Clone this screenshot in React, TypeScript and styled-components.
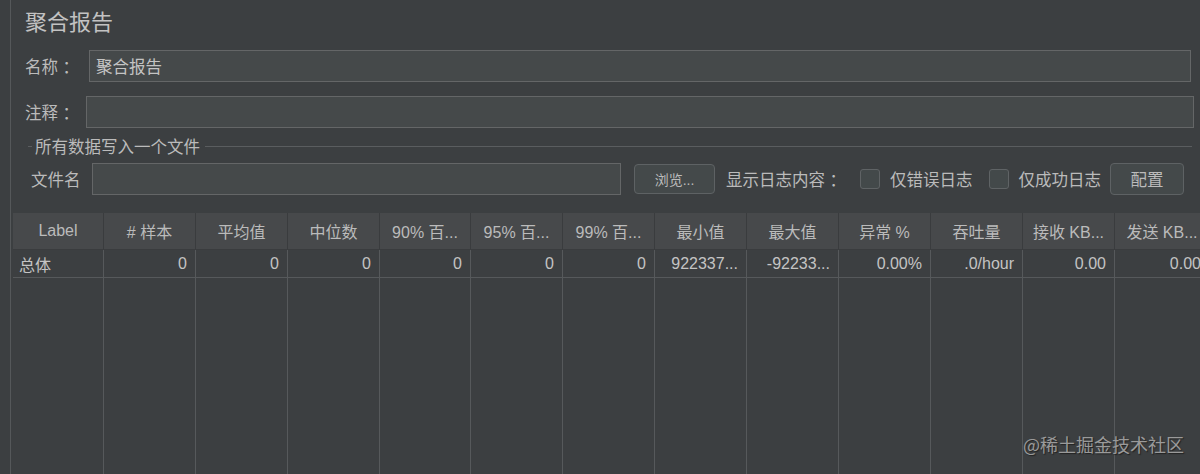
import React from "react";
import styled, { createGlobalStyle } from "styled-components";

const Global = createGlobalStyle`
  html, body { margin: 0; padding: 0; background: #3c3f41; }
  body { font-family: "Liberation Sans", "Noto Sans CJK SC", sans-serif; color: #bbbbbb; }
  * { box-sizing: border-box; }
`;

const Page = styled.div`
  width: 1200px;
  height: 474px;
  overflow: hidden;
  position: relative;
  background: #3c3f41;
  display: flex;
`;

const Gutter = styled.div`
  width: 11px;
  flex: none;
  border-right: 1px solid #55585a;
`;

const Main = styled.div`
  flex: 1;
  display: flex;
  flex-direction: column;
  padding-left: 2px;
  min-width: 0;
`;

const Form = styled.div`
  padding: 0 6px 0 12px;
  display: flex;
  flex-direction: column;
`;

const Title = styled.h1`
  margin: 0;
  padding-top: 9px;
  height: 50px;
  font-size: 22px;
  font-weight: normal;
  line-height: 28px;
  color: #c2c2c2;
`;

const Row = styled.div<{ $mt?: number }>`
  display: flex;
  align-items: center;
  height: 32px;
  margin-top: ${(p) => p.$mt ?? 0}px;
`;

const Label = styled.span<{ $w: number }>`
  width: ${(p) => p.$w}px;
  flex: none;
  font-size: 16.5px;
  color: #bbbbbb;
  white-space: nowrap;
`;

const Input = styled.div<{ $w?: number; $mr?: number }>`
  height: 32px;
  ${(p) => (p.$w ? `width: ${p.$w}px; flex: none;` : "flex: 1;")}
  margin-right: ${(p) => p.$mr ?? 0}px;
  background: #45494a;
  border: 1px solid #646667;
  display: flex;
  align-items: center;
  padding-left: 6px;
  font-size: 16.5px;
  color: #c4c4c4;
`;

const Fieldset = styled.div`
  margin-top: 8px;
  display: flex;
  flex-direction: column;
`;

const Legend = styled.div`
  display: flex;
  align-items: center;
  height: 20px;
  padding-left: 3px;
  &::before {
    content: "";
    width: 4px;
    height: 1px;
    background: #5a5d5f;
    margin-right: 3px;
  }
  &::after {
    content: "";
    flex: 1;
    height: 1px;
    background: #5a5d5f;
    margin-left: 5px;
    margin-right: 2px;
  }
`;

const LegendText = styled.span`
  font-size: 16.5px;
  color: #bbbbbb;
`;

const FileRow = styled.div`
  display: flex;
  align-items: center;
  height: 32px;
  margin-top: 7px;
  padding-left: 6px;
`;

const Button = styled.div<{ $w: number; $h: number; $ml?: number }>`
  width: ${(p) => p.$w}px;
  height: ${(p) => p.$h}px;
  margin-left: ${(p) => p.$ml ?? 0}px;
  flex: none;
  border: 1px solid #5e6264;
  border-radius: 4px;
  background: #44494a;
  display: flex;
  align-items: center;
  justify-content: center;
  font-size: ${(p) => (p.$h > 31 ? 16.5 : 14)}px;
  color: #bbbbbb;
`;

const Text = styled.span<{ $ml?: number; $mr?: number }>`
  font-size: 16.5px;
  color: #bbbbbb;
  margin-left: ${(p) => p.$ml ?? 0}px;
  margin-right: ${(p) => p.$mr ?? 0}px;
  white-space: nowrap;
`;

const Check = styled.span`
  width: 20px;
  height: 20px;
  flex: none;
  border: 1px solid #5f6365;
  border-radius: 3px;
  background: #43494a;
  margin-right: 10px;
`;

const TableWrap = styled.div`
  margin-top: 18px;
  flex: 1;
  display: flex;
  flex-direction: column;
  width: 1196px;
  min-height: 0;
`;

const COLS = "91px 92px 92px 92px 91px 92px 92px 92px 92px 92px 92px 92px 95px";

const HeadRow = styled.div`
  display: grid;
  grid-template-columns: ${COLS};
  height: 37px;
  flex: none;
`;

const HeadCell = styled.div`
  background: #47494b;
  border-right: 1px solid #3a3c3e;
  border-bottom: 1px solid #3a3c3e;
  display: flex;
  align-items: center;
  justify-content: center;
  font-size: 16px;
  color: #bbbbbb;
  white-space: nowrap;
  overflow: hidden;
`;

const DataRow = styled.div<{ $fill?: boolean }>`
  display: grid;
  grid-template-columns: ${COLS};
  ${(p) => (p.$fill ? "flex: 1;" : "height: 28px; flex: none;")}
`;

const DataCell = styled.div<{ $left?: boolean; $fill?: boolean }>`
  border-right: 1px solid #56595b;
  ${(p) => (p.$fill ? "" : "border-bottom: 1px solid #56595b;")}
  display: flex;
  align-items: center;
  justify-content: ${(p) => (p.$left ? "flex-start" : "flex-end")};
  padding: 0 8px 0 6px;
  font-size: 16px;
  color: #c4c4c4;
  white-space: nowrap;
  overflow: hidden;
`;

const Watermark = styled.div`
  position: absolute;
  right: 16px;
  bottom: 17px;
  font-size: 18px;
  color: #9a9a9a;
  text-shadow: 1px 1px 1px #222;
  font-family: "Noto Sans CJK SC", sans-serif;
`;

const headers = [
  "Label",
  "# 样本",
  "平均值",
  "中位数",
  "90% 百...",
  "95% 百...",
  "99% 百...",
  "最小值",
  "最大值",
  "异常 %",
  "吞吐量",
  "接收 KB...",
  "发送 KB...",
];

const data = [
  "总体",
  "0",
  "0",
  "0",
  "0",
  "0",
  "0",
  "922337...",
  "-92233...",
  "0.00%",
  ".0/hour",
  "0.00",
  "0.00",
];

export default function App() {
  return (
    <>
      <Global />
      <Page>
        <Gutter />
        <Main>
          <Form>
            <Title>聚合报告</Title>
            <Row>
              <Label $w={64}>名称 ：</Label>
              <Input $mr={3}>聚合报告</Input>
            </Row>
            <Row $mt={14}>
              <Label $w={61}>注释 ：</Label>
              <Input />
            </Row>
            <Fieldset>
              <Legend>
                <LegendText>所有数据写入一个文件</LegendText>
              </Legend>
              <FileRow>
                <Label $w={61}>文件名</Label>
                <Input $w={529} />
                <Button $w={81} $h={30} $ml={13}>
                  浏览...
                </Button>
                <Text $ml={11} $mr={14}>显示日志内容 ：</Text>
                <Check />
                <Text $mr={16}>仅错误日志</Text>
                <Check />
                <Text $mr={9}>仅成功日志</Text>
                <Button $w={74} $h={32}>配置</Button>
              </FileRow>
            </Fieldset>
          </Form>
          <TableWrap>
            <HeadRow>
              {headers.map((h) => (
                <HeadCell key={h}>{h}</HeadCell>
              ))}
            </HeadRow>
            <DataRow>
              {data.map((d, i) => (
                <DataCell key={i} $left={i === 0}>
                  {d}
                </DataCell>
              ))}
            </DataRow>
            <DataRow $fill>
              {headers.map((h) => (
                <DataCell key={h} $fill />
              ))}
            </DataRow>
          </TableWrap>
        </Main>
        <Watermark>@稀土掘金技术社区</Watermark>
      </Page>
    </>
  );
}
